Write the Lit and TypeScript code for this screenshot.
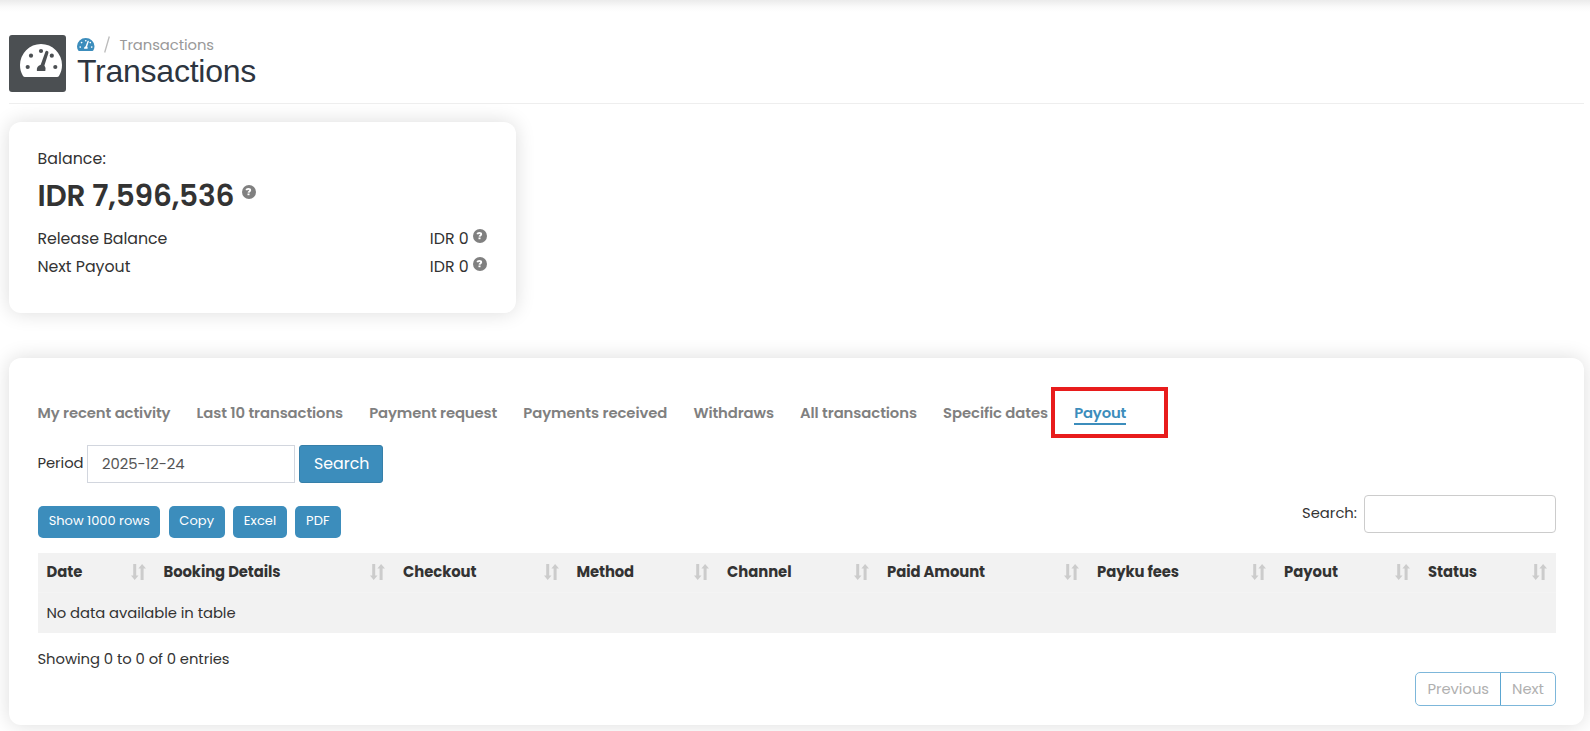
import { LitElement, html, css } from "lit";
import { customElement, property } from "lit/decorators.js";

/** A single-line label whose tracking is adjusted so it takes a given width. */
@customElement("fit-label")
class FitLabel extends LitElement {
  @property({ type: Number }) w = 0;
  @property() text = "";
  static styles = css`
    :host { display: inline-block; white-space: pre; flex: none; }
  `;
  firstUpdated() {
    const s = this.renderRoot.querySelector("span")!;
    const natural = s.getBoundingClientRect().width;
    s.style.letterSpacing = (this.w - natural) / this.text.length + "px";
  }
  render() {
    return html`<span>${this.text}</span>`;
  }
}

const label = (text: string, w: number) => html`<fit-label .text=${text} .w=${w}></fit-label>`;

const gauge = (cls: string) => html`<svg class=${cls} viewBox="0 0 42 33" preserveAspectRatio="none">
  <path fill="currentColor" d="M21 0A21 21 0 0 0 0 21C0 25 1 28.700 2.900 31.800Q3.600 33 5 33H37Q38.400 33 39.100 31.800C41 28.700 42 25 42 21A21 21 0 0 0 21 0Z"/>
  <g class="cut">
    <circle cx="7.700" cy="23" r="2.100"/><circle cx="11" cy="11.700" r="2.100"/><circle cx="21" cy="7" r="2.100"/>
    <circle cx="31.800" cy="11.700" r="2.100"/><circle cx="35.300" cy="23" r="2.100"/>
    <path d="M25.400 7.800Q26 6.400 27.400 6.900T28.400 9L24.400 21.500Q26.400 24 25.300 27H16.900Q16.200 22.400 20.700 20.800Z"/>
  </g>
</svg>`;

const help = () => html`<svg class="help" viewBox="0 0 14 14">
  <circle cx="7" cy="7" r="7" fill="#808080"/>
  <path d="M4.300 5.300C4.600 4.200 5.400 3.900 6.300 3.900C7.400 3.900 8.200 4.400 8.200 5.300C8.200 6.400 6.600 6.500 6.500 7.700" fill="none" stroke="#fff" stroke-width="1.900"/>
  <rect x="5.500" y="8.500" width="2" height="1.700" fill="#fff"/>
</svg>`;

const sort = () => html`<svg class="sort" viewBox="0 0 15 16">
  <path d="M2.200 0H5.200V11.500H7.500L3.700 16L0 11.500H2.200Z M9.600 16H12.600V4.500H15L11.100 0L7.400 4.500H9.600Z" fill="#ccc"/>
</svg>`;

const TABS: [string, number][] = [
  ["My recent activity", 133], ["Last 10 transactions", 146.5], ["Payment request", 128],
  ["Payments received", 144], ["Withdraws", 80.5], ["All transactions", 117],
  ["Specific dates", 105], ["Payout", 52],
];
const COLS: [string, number][] = [
  ["Date", 36], ["Booking Details", 117], ["Checkout", 73.5], ["Method", 57.5], ["Channel", 64.5],
  ["Paid Amount", 98], ["Payku fees", 82], ["Payout", 54], ["Status", 49],
];
const EXPORTS: [string, number][] = [["Show 1000 rows", 101], ["Copy", 35], ["Excel", 32.5], ["PDF", 24]];

@customElement("app-root")
class AppRoot extends LitElement {
  static styles = css`
    :host {
      display: flex; flex-direction: column; box-sizing: border-box; height: 731px; overflow: hidden;
      padding: 0 6px 0 9px; background: linear-gradient(#ebebeb, #fafafa 7px, #fff 12px) #fff;
      font-family: Poppins, Inter, sans-serif; font-size: 14.800px; line-height: 20px; color: #333;
    }
    * { box-sizing: border-box; }
    svg { display: block; flex: none; }
    .head { display: flex; height: 76px; margin-top: 28px; padding-top: 7px; border-bottom: 1px solid #eee; flex: none; }
    .tile { width: 57px; height: 57px; border-radius: 3px; background: #4b4f52; color: #fff; padding: 9px 0 0 11px; margin-right: 11px; }
    .big { width: 42px; height: 33px; }
    .big .cut { fill: #4b4f52; }
    .crumbs { display: flex; color: #999; }
    .small { width: 17.500px; height: 13px; margin-top: 3px; color: #3c8dbc; }
    .small .cut { fill: #fff; }
    .slash { width: 6px; height: 17px; margin: 1px 10px 0 9px; }
    .title { margin: 0; font: 400 32px/32px "Liberation Sans", Arial, sans-serif; color: #2d3540; }
    .card { background: #fff; border-radius: 12px; box-shadow: 0 0 20px rgba(0, 0, 0, 0.14); flex: none; }
    .balance { width: 507px; height: 191px; margin-top: 18px; padding: 25px 29px 0 28.400px; font-size: 15.800px; line-height: 24px; }
    .amount { display: flex; gap: 8px; margin: 5px 0 9px; font-size: 29.600px; line-height: 40px; font-weight: 600; }
    .line { display: flex; line-height: 28px; }
    .grow { flex: 1; }
    .help { width: 14px; height: 14px; margin: 4px 0 0 4.200px; }
    .amount .help { margin: 9px 0 0; }
    .main { height: 367px; margin-top: 45px; padding: 45px 28px 0 29px; }
    .tabs { display: flex; gap: 26.100px; margin-left: -0.500px; color: #808080; font-weight: 600; }
    .tab { position: relative; height: 22px; }
    .tab.active { color: #3c8dbc; border-bottom: 2px solid #3c8dbc; }
    .mark { position: absolute; left: -22.800px; top: -16px; width: 117px; height: 51px; border: 4px solid #e81c1c; }
    .period { display: flex; height: 38px; margin: 20px 0 0 -0.500px; line-height: 36px; }
    .date { width: 208px; border: 1px solid #d2d6de; padding-left: 14px; margin: 0 4px 0 3.500px; color: #555; }
    .go { width: 84px; border: 1px solid #367fa9; border-radius: 3px; background: #3c8dbc; color: #fff; padding-left: 14px; font-size: 15.800px; }
    .tools { display: flex; height: 58px; margin-top: 12px; }
    .exports { display: flex; gap: 8.200px; padding-top: 11px; }
    .exp { height: 32px; padding: 0 10.700px; border-radius: 5px; background: #3c8dbc; color: #fff; font-size: 13px; line-height: 29px; }
    .find { margin-right: 7px; line-height: 35px; }
    .box { width: 192px; height: 38px; border: 1px solid #ccc; border-radius: 4px; }
    .grid { display: grid; grid-template-columns: 117px 239.500px 173.500px 150.500px 160px 210px 187px 144px 136.500px; background: #f2f2f2; }
    .th { display: flex; justify-content: space-between; height: 40px; padding: 9px 9.200px 0 8.500px; font-weight: 700; border-bottom: 1px solid #f4f4f4; }
    .sort { width: 15px; height: 16px; margin-top: 2px; }
    .td { grid-column: 1 / -1; height: 40px; padding: 9.500px 8.500px 0; }
    .info { margin: 16px 0 0 -0.500px; }
    .pager { display: flex; width: 141px; height: 34px; margin: 3px 0 0 auto; border: 1px solid #7db7da; border-radius: 5px; color: #b0b0b0; line-height: 32px; }
    .prev { width: 85px; padding-left: 11.500px; border-right: 1px solid #5ba6d1; }
    .next { padding-left: 11px; }
  `;

  render() {
    return html`
      <div class="head">
        <div class="tile">${gauge("big")}</div>
        <div>
          <div class="crumbs">
            ${gauge("small")}
            <svg class="slash" viewBox="0 0 6 17"><path d="M5.300 0.500L0.700 16.500" stroke="#bbb" stroke-width="1.300"/></svg>
            ${label("Transactions", 94.5)}
          </div>
          <h1 class="title">${label("Transactions", 179)}</h1>
        </div>
      </div>
      <div class="card balance">
        <div>${label("Balance:", 68.5)}</div>
        <div class="amount">${label("IDR 7,596,536", 197)}${help()}</div>
        <div class="line">${label("Release Balance", 130)}<span class="grow"></span>${label("IDR 0", 39)}${help()}</div>
        <div class="line">${label("Next Payout", 93)}<span class="grow"></span>${label("IDR 0", 39)}${help()}</div>
      </div>
      <div class="card main">
        <div class="tabs">
          ${TABS.map(([t, w], i) => i === TABS.length - 1
            ? html`<div class="tab active">${label(t, w)}<div class="mark"></div></div>`
            : html`<div class="tab">${label(t, w)}</div>`)}
        </div>
        <div class="period">
          ${label("Period", 46)}
          <div class="date">${label("2025-12-24", 82.5)}</div>
          <div class="go">${label("Search", 55.5)}</div>
        </div>
        <div class="tools">
          <div class="exports">${EXPORTS.map(([t, w]) => html`<div class="exp">${label(t, w)}</div>`)}</div>
          <span class="grow"></span>
          <div class="find">${label("Search:", 55)}</div>
          <div class="box"></div>
        </div>
        <div class="grid">
          ${COLS.map(([t, w]) => html`<div class="th">${label(t, w)}${sort()}</div>`)}
          <div class="td">${label("No data available in table", 189)}</div>
        </div>
        <div class="info">${label("Showing 0 to 0 of 0 entries", 192)}</div>
        <div class="pager">
          <div class="prev">${label("Previous", 61.5)}</div>
          <div class="next">${label("Next", 32)}</div>
        </div>
      </div>
    `;
  }
}
